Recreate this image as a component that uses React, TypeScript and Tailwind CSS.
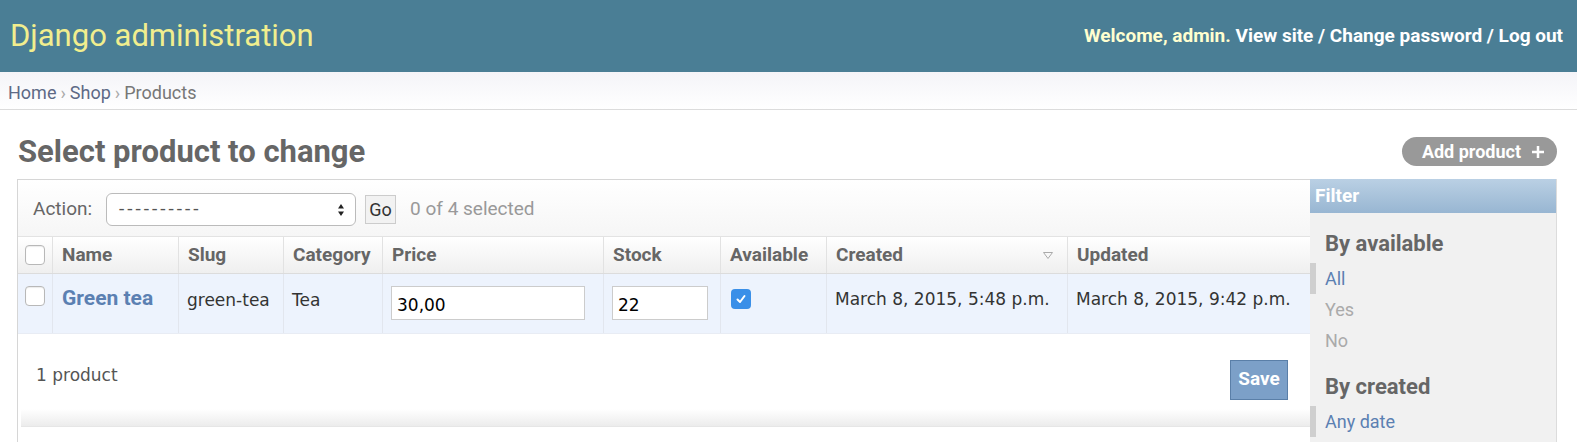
import React from "react";

const narrow = "font-['Liberation_Sans_Narrow','Roboto',sans-serif]";
const body = "font-['DejaVu_Sans','Liberation_Sans',sans-serif]";

const columns = [
  { label: "Name", w: "w-[126px]" },
  { label: "Slug", w: "w-[105px]" },
  { label: "Category", w: "w-[99px]" },
  { label: "Price", w: "w-[221px]" },
  { label: "Stock", w: "w-[117px]" },
  { label: "Available", w: "w-[106px]" },
  { label: "Created", w: "w-[241px]", sorted: true },
  { label: "Updated", w: "flex-1" },
];

function Box({ checked = false }: { checked?: boolean }) {
  if (checked) {
    return (
      <span className="flex h-[20px] w-[20px] items-center justify-center rounded-[4px] bg-[#3a8fe8]">
        <svg width="12" height="12" viewBox="0 0 12 12">
          <path d="M2.5 6.5 L5 9 L9.5 3" fill="none" stroke="white" strokeWidth="2" strokeLinecap="round" strokeLinejoin="round" />
        </svg>
      </span>
    );
  }
  return <span className="block h-[20px] w-[20px] rounded-[4px] border border-[#b8b8b8] bg-white shadow-[inset_0_1px_1px_rgba(0,0,0,0.08)]" />;
}

function FilterGroup({ title, items }: { title: string; items: { label: string; active?: boolean }[] }) {
  return (
    <div>
      <h3 className={`${narrow} pl-[15px] text-[22px] font-bold leading-[30px] text-[#666]`}>{title}</h3>
      <ul className="mt-[4px]">
        {items.map((item) => (
          <li
            key={item.label}
            className={`${narrow} flex h-[31px] items-center border-l-[6px] pl-[9px] text-[18px] ${
              item.active ? "border-[#cfcfcf] text-[#5b80b2]" : "border-transparent text-[#aaa]"
            }`}
          >
            {item.label}
          </li>
        ))}
      </ul>
    </div>
  );
}

export default function App() {
  return (
    <div className="h-[442px] w-full overflow-hidden bg-white">
      <header className="flex h-[72px] items-center justify-between bg-[#4a7e95] pl-[10px] pr-[14px]">
        <h1 className={`${narrow} pb-[2px] text-[31px] leading-none text-[#f1ee8e]`}>Django administration</h1>
        <div className={`${narrow} text-[19px] font-bold text-white`}>
          <span className="text-[#ffffd0]">Welcome, admin.</span> View site / Change password / Log out
        </div>
      </header>

      <div className={`${narrow} flex h-[38px] items-center border-b border-[#dcdcdc] bg-gradient-to-b from-[#f4f4f8] to-white pl-[8px] pt-[3px] text-[18px] text-[#777]`}>
        <span className="text-[#5e6a86]">Home</span>
        <span className="px-[4px] text-[#aaa]">›</span>
        <span className="text-[#5e6a86]">Shop</span>
        <span className="px-[4px] text-[#aaa]">›</span>
        <span>Products</span>
      </div>

      <div className="pl-[17px] pr-[20px]">
        <div className="flex h-[69px] items-center justify-between">
          <h2 className={`${narrow} pl-[1px] pt-[16px] text-[31px] font-bold text-[#666]`}>Select product to change</h2>
          <button className={`${narrow} mt-[14px] flex h-[29px] items-center gap-[10px] rounded-full bg-[#999] pl-[20px] pr-[12px] text-[18px] font-bold text-white`}>
            Add product
            <svg width="14" height="14" viewBox="0 0 14 14">
              <path d="M7 1 V13 M1 7 H13" stroke="white" strokeWidth="2.5" />
            </svg>
          </button>
        </div>

        <div className="flex">
          <div className="flex-1 border-l border-t border-[#d6d6d6]">
            <div className={`${narrow} flex h-[57px] items-center border-b border-[#e3e3e3] bg-gradient-to-b from-white to-[#f6f6f6] pl-[15px] pt-[3px] text-[19px] text-[#666]`}>
              <span>Action:</span>
              <div className="ml-[14px] flex h-[33px] w-[250px] items-center justify-between rounded-[6px] border border-[#bbb] bg-white pl-[12px] pr-[10px]">
                <span className="tracking-[3px] text-[#555]">----------</span>
                <svg width="8" height="14" viewBox="0 0 8 14">
                  <path d="M4 1 L7 5.5 H1 Z M4 13 L7 8.5 H1 Z" fill="#222" />
                </svg>
              </div>
              <button className="ml-[9px] h-[29px] w-[31px] border border-[#ccc] bg-[#f2f2f2] text-[18px] text-[#333]">Go</button>
              <span className="ml-[14px] text-[#999]">0 of 4 selected</span>
            </div>

            <div className={`${narrow} flex h-[37px] border-b border-[#dcdcdc] bg-gradient-to-b from-white to-[#efefef] text-[19px] font-bold text-[#666]`}>
              <div className="flex w-[35px] items-center justify-center border-r border-[#e2e2e2]">
                <Box />
              </div>
              {columns.map((c) => (
                <div key={c.label} className={`${c.w} flex items-center justify-between border-r border-[#e2e2e2] pl-[9px] pr-[14px] last:border-r-0`}>
                  <span>{c.label}</span>
                  {c.sorted && (
                    <svg width="10" height="7" viewBox="0 0 10 7">
                      <path d="M0.5 0.5 H9.5 L5 6.5 Z" fill="none" stroke="#aaa" />
                    </svg>
                  )}
                </div>
              ))}
            </div>

            <div className={`${body} flex h-[60px] border-b border-[#e8ecf4] bg-[#edf3fd] text-[17px] leading-[24px] text-[#333]`}>
              <div className="flex w-[35px] items-start justify-center border-r border-[#e2e6ee] pt-[12px]">
                <Box />
              </div>
              <div className={`${narrow} w-[126px] border-r border-[#e2e6ee] pl-[9px] pt-[10px] text-[21px] font-bold leading-[28px] text-[#5b80b2]`}>Green tea</div>
              <div className="w-[105px] border-r border-[#e2e6ee] pl-[8px] pt-[14px]">green-tea</div>
              <div className="w-[99px] border-r border-[#e2e6ee] pl-[8px] pt-[14px]">Tea</div>
              <div className="w-[221px] border-r border-[#e2e6ee] pl-[8px] pt-[12px]">
                <div className="flex h-[34px] w-[194px] items-center border border-[#ccc] bg-white pl-[5px] pt-[3px] text-black">30,00</div>
              </div>
              <div className="w-[117px] border-r border-[#e2e6ee] pl-[8px] pt-[12px]">
                <div className="flex h-[34px] w-[96px] items-center border border-[#ccc] bg-white pl-[5px] pt-[3px] text-black">22</div>
              </div>
              <div className="w-[106px] border-r border-[#e2e6ee] pl-[10px] pt-[15px]">
                <Box checked />
              </div>
              <div className="w-[241px] border-r border-[#e2e6ee] pl-[8px] pt-[13px]">March 8, 2015, 5:48 p.m.</div>
              <div className="flex-1 pl-[8px] pt-[13px]">March 8, 2015, 9:42 p.m.</div>
            </div>

            <div className="flex h-[75px] items-center justify-between pl-[18px] pr-[22px]">
              <span className={`${body} pt-[8px] text-[17px] text-[#555]`}>1 product</span>
              <button className={`${narrow} mt-[16px] h-[40px] w-[58px] border border-[#5a7fa8] bg-[#7ca0c8] text-[19px] font-bold text-white`}>Save</button>
            </div>
            <div className="ml-[3px] h-[18px] border-b border-[#e6e6e6] bg-gradient-to-b from-white to-[#ececec]" />
            <div className="h-[20px]" />
          </div>

          <div className="w-[247px] border-r border-[#dcdcdc] bg-[#f1f1f1]">
            <div className={`${narrow} flex h-[34px] items-center bg-gradient-to-b from-[#bad0e4] to-[#98b6d2] pl-[5px] text-[19px] font-bold text-white`}>Filter</div>
            <div className="pt-[16px]">
              <FilterGroup title="By available" items={[{ label: "All", active: true }, { label: "Yes" }, { label: "No" }]} />
            </div>
            <div className="pt-[16px]">
              <FilterGroup title="By created" items={[{ label: "Any date", active: true }]} />
            </div>
          </div>
        </div>
      </div>
    </div>
  );
}
